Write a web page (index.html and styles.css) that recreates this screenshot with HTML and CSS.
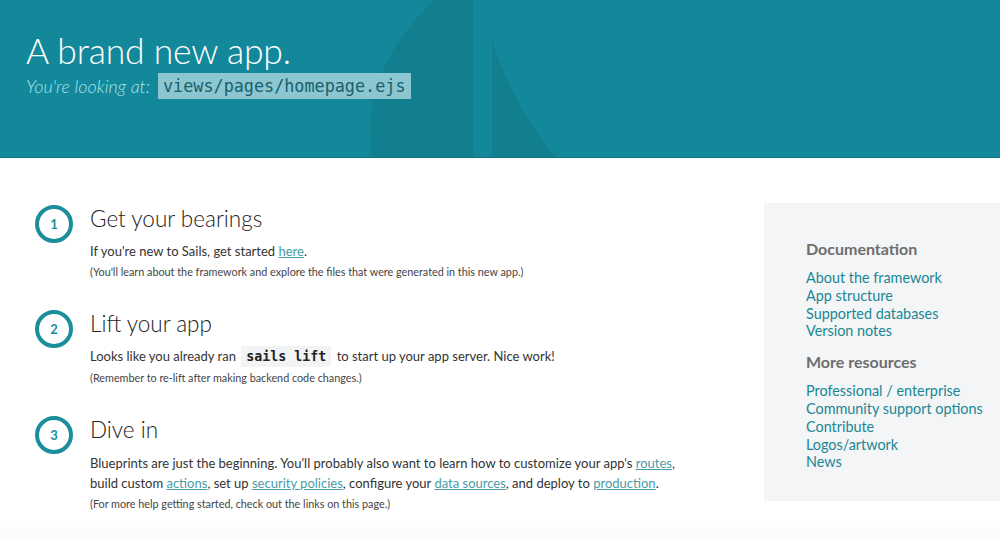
FILE: index.html
```html
<!DOCTYPE html>
<html>
<head>
<meta charset="utf-8">
<link rel="stylesheet" href="styles.css">
</head>
<body>
<header class="hero">
  <svg class="hero-art" width="1000" height="157" viewBox="0 0 1000 157" aria-hidden="true">
    <path d="M473 0 L433 0 C395 40 370 80 370 130 L372 157 L473 157 Z" fill="#117f8e"/>
    <path d="M492 40 C505 80 525 120 555 157 L492 157 Z" fill="#117f8e"/>
  </svg>
  <div class="hero-inner">
    <h1 class="hero-title">A brand new app.</h1>
    <p class="hero-sub"><em>You're looking at:</em> <code class="hero-code">views/pages/homepage.ejs</code></p>
  </div>
</header>
<main class="page">
  <section class="steps">
    <div class="step">
      <div class="step-num">1</div>
      <div class="step-body">
        <h2 class="step-title">Get your bearings</h2>
        <p class="step-text">If you're new to Sails, get started <a href="#">here</a>.</p>
        <p class="step-note">(You'll learn about the framework and explore the files that were generated in this new app.)</p>
      </div>
    </div>
    <div class="step">
      <div class="step-num">2</div>
      <div class="step-body">
        <h2 class="step-title">Lift your app</h2>
        <p class="step-text">Looks like you already ran <code class="inline-code">sails lift</code> to start up your app server. Nice work!</p>
        <p class="step-note">(Remember to re-lift after making backend code changes.)</p>
      </div>
    </div>
    <div class="step">
      <div class="step-num">3</div>
      <div class="step-body">
        <h2 class="step-title">Dive in</h2>
        <p class="step-text step-text-wide">Blueprints are just the beginning. You'll probably also want to learn how to customize your app's <a href="#">routes</a>,<br>build custom <a href="#">actions</a>, set up <a href="#">security policies</a>, configure your <a href="#">data sources</a>, and deploy to <a href="#">production</a>.</p>
        <p class="step-note">(For more help getting started, check out the links on this page.)</p>
      </div>
    </div>
  </section>
  <aside class="sidebar">
    <h3 class="side-title">Documentation</h3>
    <ul class="side-links">
      <li><a href="#">About the framework</a></li>
      <li><a href="#">App structure</a></li>
      <li><a href="#">Supported databases</a></li>
      <li><a href="#">Version notes</a></li>
    </ul>
    <h3 class="side-title">More resources</h3>
    <ul class="side-links">
      <li><a href="#">Professional / enterprise</a></li>
      <li><a href="#">Community support options</a></li>
      <li><a href="#">Contribute</a></li>
      <li><a href="#">Logos/artwork</a></li>
      <li><a href="#">News</a></li>
    </ul>
  </aside>
</main>
<div class="footer-fade"></div>
</body>
</html>
```
FILE: styles.css
```css
* { box-sizing: border-box; }
html, body { margin: 0; padding: 0; }
body {
  font-family: Lato, "Open Sans", sans-serif;
  color: #222;
  background: #fff;
  overflow: hidden;
}
.hero {
  position: relative;
  height: 158px;
  background: #13889a;
  border-bottom: 1px solid #0e7683;
  overflow: hidden;
}
.hero-art {
  position: absolute;
  left: 0;
  top: 0;
}
.hero-inner {
  position: relative;
  padding: 29px 0 0 26px;
}
.hero-title {
  margin: 0;
  font-weight: 300;
  font-size: 35.5px;
  line-height: 44px;
  color: #fff;
  letter-spacing: -0.2px;
}
.hero-sub {
  margin: 0;
  display: flex;
  align-items: center;
  gap: 8px;
  font-size: 18px;
  line-height: 26px;
  color: #a9e2ec;
}
.hero-sub em {
  font-weight: 300;
  font-style: italic;
}
.hero-code {
  font-family: "DejaVu Sans Mono", monospace;
  font-size: 16.8px;
  line-height: 26px;
  padding: 0 5px;
  background: #8cc6d0;
  color: #17606c;
}
.page {
  display: flex;
  justify-content: space-between;
  padding-top: 45px;
}
.steps {
  margin-top: 2px;
  padding-left: 35px;
  display: flex;
  flex-direction: column;
  gap: 30px;
}
.step {
  display: flex;
  gap: 17px;
}
.step-body {
  max-width: 620px;
}
.step-num {
  flex: none;
  width: 38px;
  height: 38px;
  border: 4px solid #1b8e9c;
  border-radius: 50%;
  display: flex;
  align-items: center;
  justify-content: center;
  color: #1b8e9c;
  font-weight: 700;
  font-size: 13px;
}
.step-title {
  margin: 0;
  font-weight: 300;
  font-size: 22.5px;
  line-height: 28px;
  color: #222;
}
.step-text {
  margin: 8px 0 0;
  font-size: 13px;
  line-height: 20px;
  color: #333;
}
.step-text-wide {
  margin-top: 9px;
}
.step-text a {
  color: #4a9ba6;
  text-decoration: underline;
}
.step-note {
  margin: 3px 0 0;
  font-size: 10.8px;
  line-height: 16px;
  color: #444;
}
.inline-code {
  font-family: "DejaVu Sans Mono", monospace;
  font-weight: 700;
  font-size: 13.3px;
  background: #f2f3f4;
  padding: 3px 5px;
  margin: 0 2px;
  color: #222;
}
.sidebar {
  width: 236px;
  flex: none;
  background: #f4f5f7;
  padding: 36px 0 32px 42px;
  align-self: flex-start;
  height: 298px;
}
.side-title {
  margin: 0;
  font-weight: 700;
  font-size: 16px;
  line-height: 20px;
  color: #6e6e6e;
}
.side-links {
  list-style: none;
  margin: 10px 0 12px;
  padding: 0;
}
.side-links li {
  font-size: 14.4px;
  line-height: 17.8px;
}
.side-links a {
  color: #1a8795;
  text-decoration: none;
}
.footer-fade {
  height: 40px;
  margin-top: 8px;
  background: linear-gradient(#fff, #f7f7f7);
}
```
